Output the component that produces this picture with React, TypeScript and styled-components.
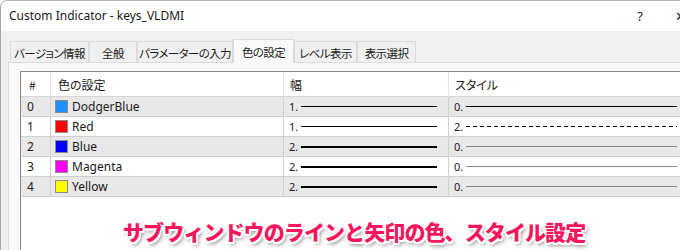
import React from "react";
import styled, { createGlobalStyle } from "styled-components";

const Global = createGlobalStyle`
  html, body { margin: 0; padding: 0; background: #ffffff; }
  body { width: 680px; height: 250px; overflow: hidden; }
`;

const UI_FONT = `"Noto Sans", "Noto Sans CJK JP", sans-serif`;
const JP_FONT = `"Noto Sans CJK JP", "Noto Sans", sans-serif`;

const Window = styled.div`
  position: relative;
  box-sizing: border-box;
  width: 690px;
  height: 250px;
  display: flex;
  flex-direction: column;
  background: #f0f0f0;
  border-top: 1px solid #b4b4b4;
  border-left: 1px solid #a8a8a8;
  border-top-left-radius: 7px;
  overflow: hidden;
  font-family: ${UI_FONT};
  color: #1a1a1a;
`;

const TitleBar = styled.div`
  height: 30px;
  flex: none;
  display: flex;
  align-items: center;
  background: #ffffff;
  padding-left: 8px;
`;

const Title = styled.div`
  font-size: 12px;
  flex: 1;
  padding-bottom: 1px;
`;

const CaptionButton = styled.div<{ $w: number; $gap?: number }>`
  width: ${(p) => p.$w}px;
  margin-left: ${(p) => p.$gap ?? 0}px;
  text-align: center;
  font-size: 13px;
  color: #222;
  flex: none;
`;

const Body = styled.div`
  flex: 1;
  display: flex;
  flex-direction: column;
  padding: 8px 0 0 7px;
  min-height: 0;
`;

const TabStrip = styled.div`
  display: flex;
  align-items: flex-end;
  height: 23px;
  padding-left: 2px;
  flex: none;
`;

const Tab = styled.div<{ $w: number; $active?: boolean }>`
  box-sizing: border-box;
  width: ${(p) => p.$w}px;
  height: ${(p) => (p.$active ? 24 : 21)}px;
  margin-bottom: ${(p) => (p.$active ? -1 : 0)}px;
  background: ${(p) => (p.$active ? "#f9f9f9" : "#f0f0f0")};
  border: 1px solid #dcdcdc;
  border-bottom: none;
  display: flex;
  align-items: center;
  justify-content: center;
  white-space: nowrap;
  overflow: hidden;
  font-family: ${JP_FONT};
  font-feature-settings: "palt";
  font-size: 11.5px;
  letter-spacing: -0.6px;
  color: #1a1a1a;
  position: relative;
  z-index: ${(p) => (p.$active ? 1 : 0)};
  padding-top: ${(p) => (p.$active ? 0 : 1)}px;
`;

const Panel = styled.div`
  flex: 1;
  background: #f9f9f9;
  border-top: 1px solid #dcdcdc;
  border-left: 1px solid #dcdcdc;
  padding: 8px 0 0 11px;
  display: flex;
  min-height: 0;
`;

const List = styled.div`
  flex: 1;
  background: #ffffff;
  border-top: 1px solid #828790;
  border-left: 1px solid #828790;
  overflow: hidden;
`;

const Grid = styled.div`
  display: grid;
  grid-template-columns: 30px 233px 165px 240px;
`;

const HeadCell = styled.div<{ $pad?: number }>`
  box-sizing: border-box;
  height: 25px;
  border-right: 1px solid #e5e5e5;
  border-bottom: 1px solid #d5d5d5;
  display: flex;
  align-items: center;
  padding-left: ${(p) => p.$pad ?? 8}px;
  font-family: ${JP_FONT};
  font-feature-settings: "palt";
  font-size: 12px;
  color: #1a1a1a;
  white-space: nowrap;
`;

const Cell = styled.div<{ $odd: boolean; $pad?: number }>`
  box-sizing: border-box;
  height: 20px;
  background: ${(p) => (p.$odd ? "#ffffff" : "#e8e8e8")};
  border-right: 1px solid #d0d0d0;
  border-bottom: 1px solid #d0d0d0;
  display: flex;
  align-items: center;
  padding-left: ${(p) => p.$pad ?? 5}px;
  font-size: 12px;
  color: #1a1a1a;
  white-space: nowrap;
`;

const Swatch = styled.span<{ $c: string }>`
  box-sizing: border-box;
  width: 13px;
  height: 13px;
  background: ${(p) => p.$c};
  border: 1px solid #8c8c8c;
  margin-right: 4px;
  flex: none;
`;

const Value = styled.span`
  font-size: 11px;
  width: 12px;
  flex: none;
`;

const LineSample = styled.span<{ $weight: number; $dashed?: boolean; $tone: string }>`
  flex: 1;
  margin-right: 11px;
  height: ${(p) => p.$weight}px;
  background: ${(p) =>
    p.$dashed
      ? `repeating-linear-gradient(90deg, ${p.$tone} 0 4px, transparent 4px 7px)`
      : p.$tone};
`;

const Caption = styled.div`
  position: absolute;
  left: 122px;
  top: 215px;
  font-family: ${JP_FONT};
  font-weight: 900;
  font-size: 21px;
  letter-spacing: -0.9px;
  color: #f5175d;
  white-space: nowrap;
  text-shadow: -2px 0 #fff, 2px 0 #fff, 0 -2px #fff, 0 2px #fff,
    -1.5px -1.5px #fff, 1.5px -1.5px #fff, -1.5px 1.5px #fff, 1.5px 1.5px #fff,
    2px 3px 4px rgba(0, 0, 0, 0.55);
`;

type Row = { name: string; color: string; width: number; style: number };

const rows: Row[] = [
  { name: "DodgerBlue", color: "#1e90ff", width: 1, style: 0 },
  { name: "Red", color: "#ff0000", width: 1, style: 2 },
  { name: "Blue", color: "#0000ff", width: 2, style: 0 },
  { name: "Magenta", color: "#ff00ff", width: 2, style: 0 },
  { name: "Yellow", color: "#ffff00", width: 2, style: 0 },
];

const tabs = [
  { label: "バージョン情報", w: 79 },
  { label: "全般", w: 48 },
  { label: "パラメーターの入力", w: 96 },
  { label: "色の設定", w: 61, active: true },
  { label: "レベル表示", w: 63 },
  { label: "表示選択", w: 59 },
];

export default function App() {
  return (
    <>
      <Global />
      <Window>
        <TitleBar>
          <Title>Custom Indicator - keys_VLDMI</Title>
          <CaptionButton $w={20}>?</CaptionButton>
          <CaptionButton $w={20} $gap={20}>✕</CaptionButton>
        </TitleBar>
        <Body>
          <TabStrip>
            {tabs.map((t) => (
              <Tab key={t.label} $w={t.w} $active={t.active}>
                {t.label}
              </Tab>
            ))}
          </TabStrip>
          <Panel>
            <List>
              <Grid>
                <HeadCell $pad={8}>#</HeadCell>
                <HeadCell $pad={7}>色の設定</HeadCell>
                <HeadCell $pad={6}>幅</HeadCell>
                <HeadCell $pad={6}>スタイル</HeadCell>
                {rows.map((r, i) => {
                  const odd = i % 2 === 1;
                  const sTone = r.width === 1 ? "#000000" : "#8a8a8a";
                  return (
                    <React.Fragment key={r.name}>
                      <Cell $odd={odd} $pad={6}>{i}</Cell>
                      <Cell $odd={odd} $pad={4}>
                        <Swatch $c={r.color} />
                        {r.name}
                      </Cell>
                      <Cell $odd={odd} $pad={5}>
                        <Value>{r.width}.</Value>
                        <LineSample $weight={r.width} $tone="#000000" />
                      </Cell>
                      <Cell $odd={odd} $pad={5}>
                        <Value>{r.style}.</Value>
                        <LineSample $weight={1} $tone={sTone} $dashed={r.style === 2} />
                      </Cell>
                    </React.Fragment>
                  );
                })}
              </Grid>
            </List>
          </Panel>
        </Body>
        <Caption>サブウィンドウのラインと矢印の色、スタイル設定</Caption>
      </Window>
    </>
  );
}
